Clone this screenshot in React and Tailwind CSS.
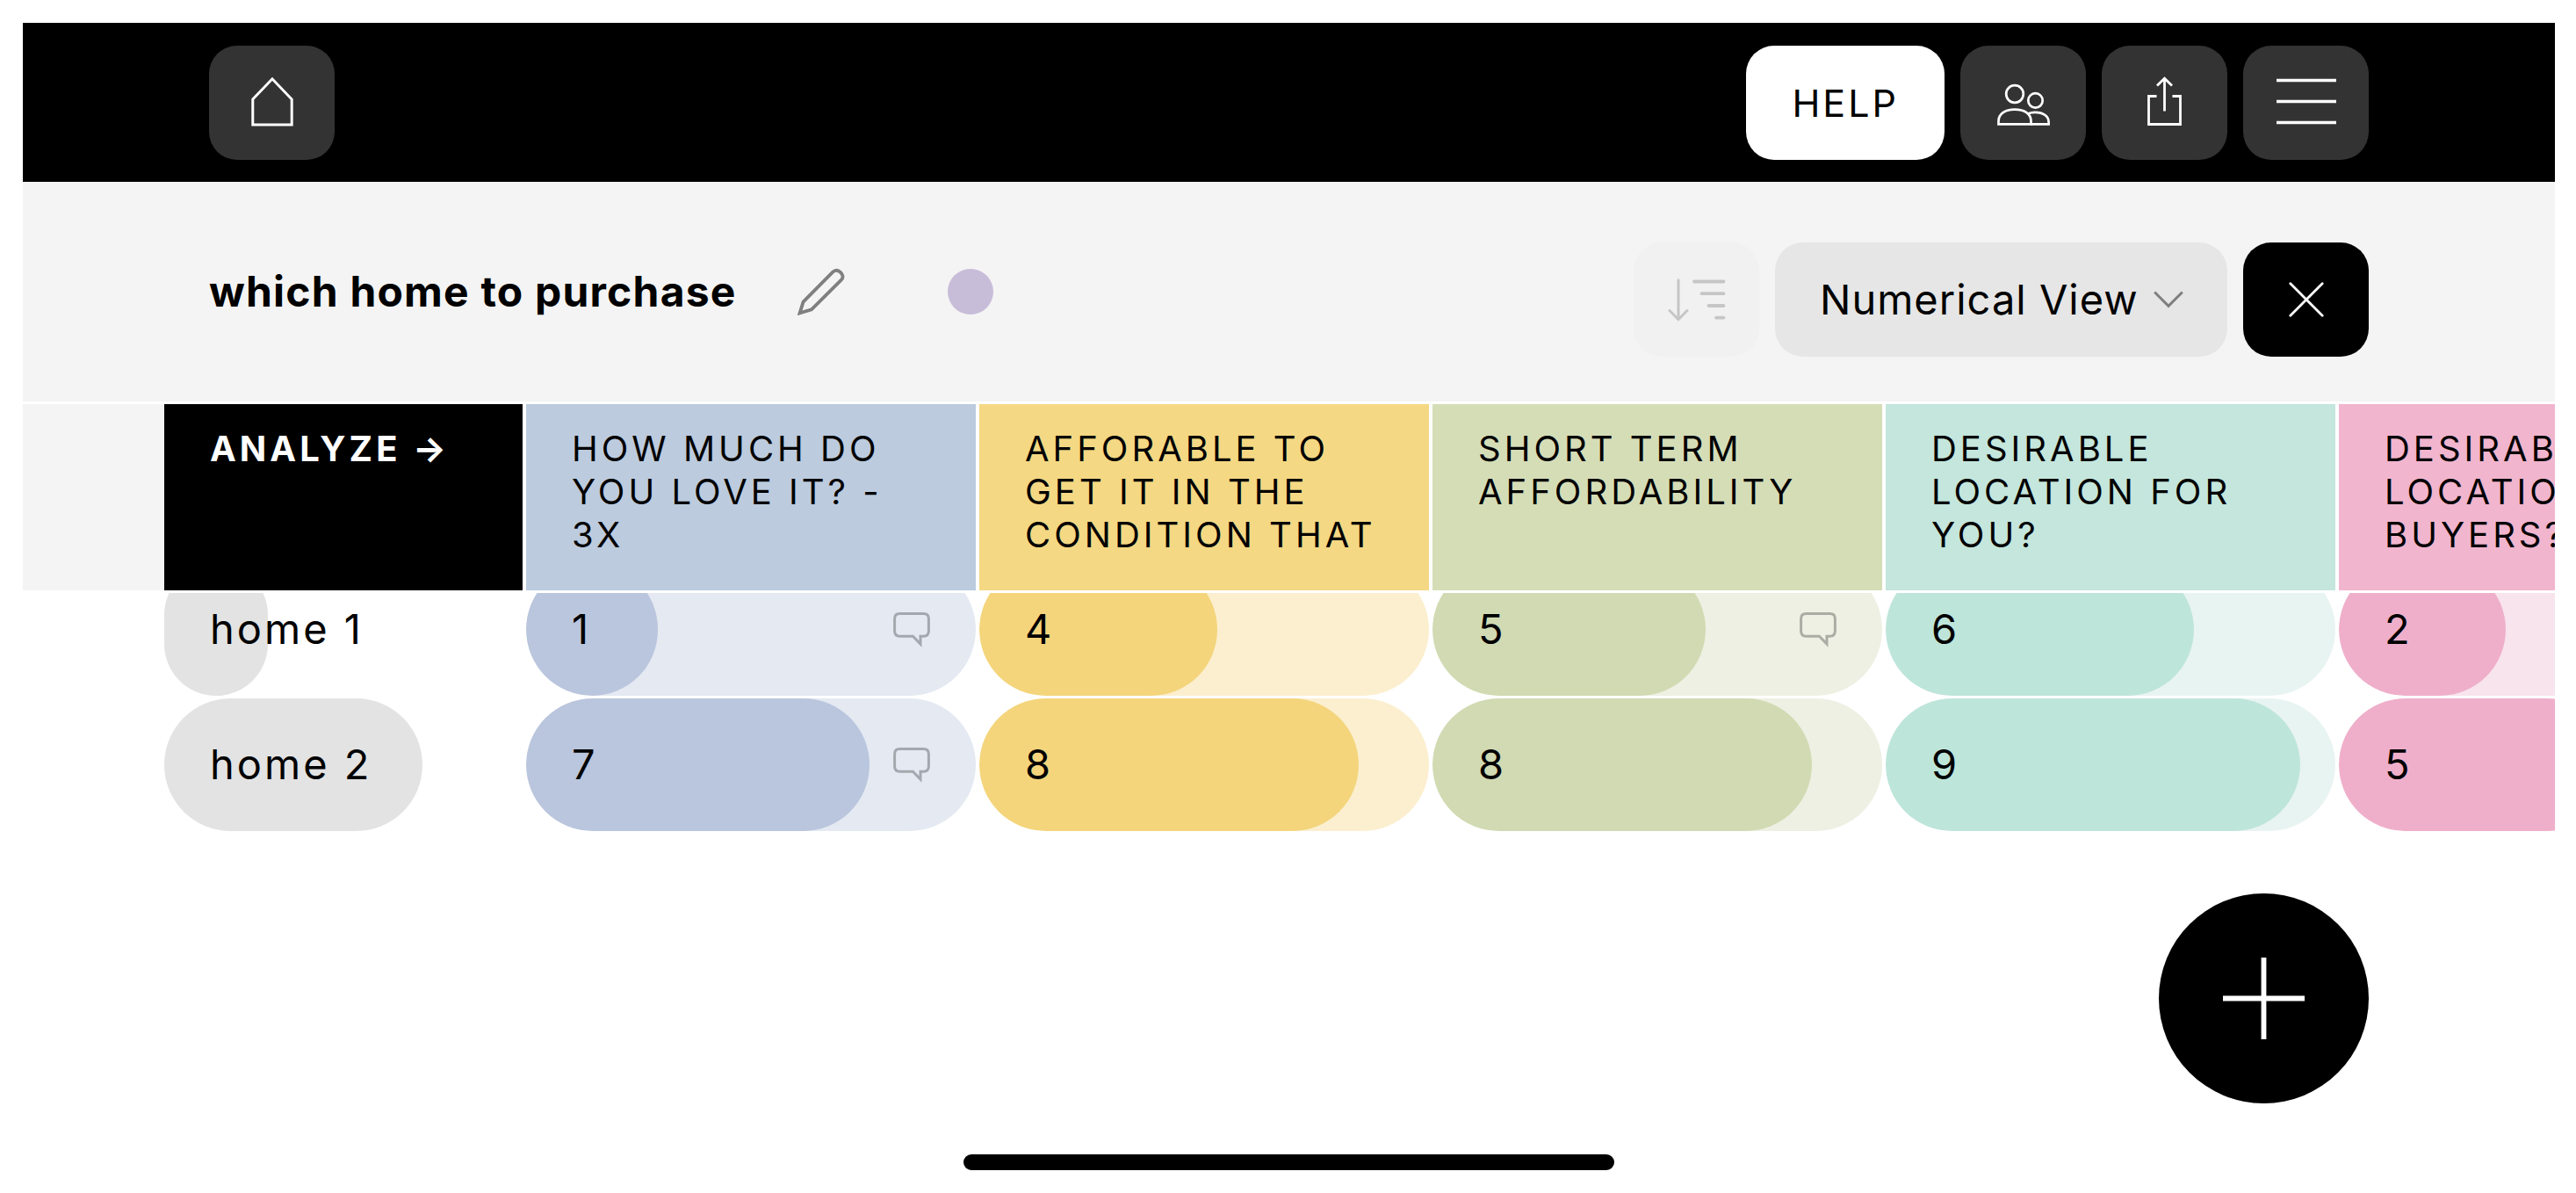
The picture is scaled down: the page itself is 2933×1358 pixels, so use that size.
import React from "react";

const columns = [
  { title: "How much do you love it? - 3x", head: "bg-[#bccbde]", fill: "bg-[#bac6dd]", track: "bg-[#e4e9f2]" },
  { title: "Afforable to get it in the condition that", head: "bg-[#f4d883]", fill: "bg-[#f4d57c]", track: "bg-[#fbefcf]" },
  { title: "Short term affordability", head: "bg-[#d5ddb7]", fill: "bg-[#d1dab2]", track: "bg-[#eef0e3]" },
  { title: "Desirable location for you?", head: "bg-[#c4e6dc]", fill: "bg-[#bee5da]", track: "bg-[#e8f4f1]" },
  { title: "Desirable location for buyers?", head: "bg-[#f1b5ce]", fill: "bg-[#efafca]", track: "bg-[#f8e4ed]" },
];

const rows = [
  {
    name: "home 1",
    share: 29,
    cells: [{ score: 1, note: true }, { score: 4 }, { score: 5, note: true }, { score: 6 }, { score: 2 }],
  },
  {
    name: "home 2",
    share: 72,
    cells: [{ score: 7, note: true }, { score: 8 }, { score: 8 }, { score: 9 }, { score: 5 }],
  },
];

// A score of 10 fills the pill; a score of 0 still leaves a visible cap.
const fillWidth = (score) => `${21.5 + score * 7.85}%`;

const HomeIcon = () => (
  <svg width="48" height="60" viewBox="0 0 48 60" fill="none" stroke="#fff" strokeWidth="3" aria-hidden="true">
    <path d="M1.8 26 L24 2.8 L46.2 26 V55 H1.8 Z" />
  </svg>
);

const PeopleIcon = () => (
  <svg width="60" height="51" viewBox="0 -4 60 51" fill="none" stroke="#fff" strokeWidth="2.7" aria-hidden="true">
    <circle cx="20" cy="11" r="9.8" />
    <circle cx="43.5" cy="18.4" r="8.2" />
    <path d="M1.5 45.4 V42 C1.5 33.5 9 28.6 20 28.6 S38.5 33.5 38.5 42 V45.4 Z" />
    <path d="M35 33.4 C37.5 32.3 40 31.8 43 31.8 C53 31.8 58.6 36.5 58.6 43 V45.4 H38.5" />
  </svg>
);

const ShareIcon = () => (
  <svg width="39" height="61" viewBox="0 0 39 61" fill="none" stroke="#fff" strokeWidth="2.8" aria-hidden="true">
    <path d="M10.5 22.5 H1.5 V54.5 H37.5 V22.5 H28.5" />
    <path d="M19.5 39.5 V2.2 M11 10.5 L19.5 2.2 L28 10.5" />
  </svg>
);

const MenuIcon = () => (
  <svg width="68" height="56" viewBox="0 0 68 56" fill="none" stroke="#fff" strokeWidth="3.6" aria-hidden="true">
    <path d="M0 2.5 H68 M0 26.5 H68 M0 50.5 H68" />
  </svg>
);

const PencilIcon = () => (
  <svg width="54" height="54" viewBox="0 0 54 54" fill="none" stroke="#7f7f7f" strokeWidth="3.8" aria-hidden="true">
    <path d="M2.6 51.4 L6.6 38.6 L40.2 4.7 C43.4 1.6 46.4 2.4 48.9 4.9 C51.9 7.9 52.7 10.9 49.6 13.9 L16 47.4 Z" />
  </svg>
);

const SortIcon = () => (
  <svg width="66" height="49" viewBox="0 0 66 49" fill="none" stroke="#c6c6c6" strokeWidth="3" strokeLinecap="round" strokeLinejoin="round" aria-hidden="true">
    <path d="M12 1.8 V46.5 M2 36.5 L12 46.8 L22 36.5" />
    <path d="M30 3.5 H63.5 M38.5 17.2 H63.5 M46.5 31 H63.5 M55 44.6 H63.5" strokeWidth="3.8" />
  </svg>
);

const ChevronIcon = () => (
  <svg className="pointer-events-none absolute top-1/2 right-[50px] -translate-y-1/2" width="34" height="20" viewBox="0 0 34 20" fill="none" stroke="#7f7f7f" strokeWidth="3" aria-hidden="true">
    <path d="M1.2 1.5 L17 17.3 L32.8 1.5" />
  </svg>
);

const CloseIcon = () => (
  <svg width="40" height="40" viewBox="0 0 40 40" fill="none" stroke="#fff" strokeWidth="2.8" strokeLinecap="round" aria-hidden="true">
    <path d="M1.8 1.8 L38.2 38.2 M38.2 1.8 L1.8 38.2" />
  </svg>
);

const PlusIcon = () => (
  <svg width="93" height="93" viewBox="0 0 93 93" fill="none" stroke="#fff" strokeWidth="5.8" aria-hidden="true">
    <path d="M46.5 0 V93 M0 46.5 H93" />
  </svg>
);

const NoteIcon = () => (
  <svg width="42" height="40" viewBox="0 0 42 40" fill="none" stroke="#000" strokeOpacity="0.28" strokeWidth="3" aria-hidden="true">
    <path d="M7.5 1.6 H34.5 Q40.4 1.6 40.4 7.5 V21.3 Q40.4 27.2 34.5 27.2 H31 V36 L22.4 27.2 H7.5 Q1.6 27.2 1.6 21.3 V7.5 Q1.6 1.6 7.5 1.6 Z" />
  </svg>
);

function IconButton({ label, tone, disabled, children }) {
  return (
    <button
      type="button"
      aria-label={label}
      disabled={disabled}
      className={`flex h-[130px] w-[143px] shrink-0 items-center justify-center rounded-4xl ${tone}`}
    >
      {children}
    </button>
  );
}

function TopBar() {
  return (
    <header className="flex items-center justify-between bg-black px-[212px] pt-[26px] pb-[25px]">
      <IconButton label="Home" tone="bg-[#333333]"><HomeIcon /></IconButton>
      <div className="flex gap-[18px]">
        <button type="button" className="h-[130px] rounded-4xl bg-white px-[52px] text-[43px] tracking-[3px]">HELP</button>
        <IconButton label="People" tone="bg-[#333333]"><PeopleIcon /></IconButton>
        <IconButton label="Share" tone="bg-[#333333]"><ShareIcon /></IconButton>
        <IconButton label="Menu" tone="bg-[#333333]"><MenuIcon /></IconButton>
      </div>
    </header>
  );
}

function TitleBar() {
  return (
    <section className="flex items-center justify-between bg-[#f4f4f4] px-[212px] py-[51px]">
      <div className="flex items-center">
        <h1 className="text-[48px] font-bold tracking-wide whitespace-nowrap">which home to purchase</h1>
        <button type="button" aria-label="Rename" className="ml-[69px]"><PencilIcon /></button>
        <button type="button" aria-label="Color" className="ml-[117px] size-[52px] rounded-full bg-[#c8bdd9]" />
      </div>
      <div className="mt-[18px] flex gap-[18px]">
        <IconButton label="Sort" tone="bg-[#f1f1f1]" disabled><SortIcon /></IconButton>
        <div className="relative">
          <select aria-label="View" className="h-[130px] w-[515px] appearance-none rounded-4xl bg-[#e6e6e6] pl-[51px] text-[47px] tracking-[1px] text-black">
            <option>Numerical View</option>
          </select>
          <ChevronIcon />
        </div>
        <IconButton label="Close" tone="bg-black"><CloseIcon /></IconButton>
      </div>
    </section>
  );
}

function ScoreCell({ cell, column }) {
  return (
    <td className={`grid h-[151px] w-[512px] shrink-0 items-center overflow-hidden rounded-full p-0 ${column.track}`}>
      <div className={`col-start-1 row-start-1 h-full rounded-full ${column.fill}`} style={{ width: fillWidth(cell.score) }} />
      <div className="col-start-1 row-start-1 flex items-center justify-between px-[52px]">
        <span>{cell.score}</span>
        {cell.note && <button type="button" aria-label="Note"><NoteIcon /></button>}
      </div>
    </td>
  );
}

function DecisionTable() {
  return (
    <div className="overflow-hidden">
      <table className="mt-[3px] block">
        <thead className="block text-[40px] leading-[49px] tracking-widest uppercase">
          <tr className="flex gap-1">
            <th className="h-[212px] w-[569px] shrink-0 border-l-[161px] border-[#f4f4f4] bg-black px-[52px] pt-[26px] text-left font-bold whitespace-nowrap text-white">
              <button type="button" className="uppercase tracking-widest">Analyze →</button>
            </th>
            {columns.map((column) => (
              <th key={column.title} className={`h-[212px] w-[512px] shrink-0 pt-[26px] pr-10 pl-[52px] text-left font-normal ${column.head}`}>
                {column.title}
              </th>
            ))}
          </tr>
        </thead>
        <tbody className="mt-[3px] block overflow-hidden text-[47px]">
          {rows.map((row, index) => (
            <tr key={row.name} className={`flex gap-1 pl-[161px] ${index === 0 ? "-mt-[34px]" : "mt-[3px]"}`}>
              <th className="grid h-[151px] w-[408px] shrink-0 items-center p-0 text-left font-normal tracking-[3px]">
                <div className="col-start-1 row-start-1 h-full rounded-full bg-[#e3e3e3]" style={{ width: `${row.share}%` }} />
                <span className="col-start-1 row-start-1 pl-[52px]">{row.name}</span>
              </th>
              {row.cells.map((cell, i) => (
                <ScoreCell key={columns[i].title} cell={cell} column={columns[i]} />
              ))}
            </tr>
          ))}
        </tbody>
      </table>
    </div>
  );
}

export default function App() {
  return (
    <div className="flex min-h-screen flex-col bg-white py-[26px] pr-6 pl-[26px] font-['Inter',sans-serif] text-black">
      <TopBar />
      <TitleBar />
      <DecisionTable />
      <footer className="mt-auto flex flex-col items-center">
        <button type="button" aria-label="Add" className="mr-[212px] mb-[58px] flex size-[239px] items-center justify-center self-end rounded-full bg-black">
          <PlusIcon />
        </button>
        <div className="h-[18px] w-[741px] rounded-full bg-black" />
      </footer>
    </div>
  );
}
